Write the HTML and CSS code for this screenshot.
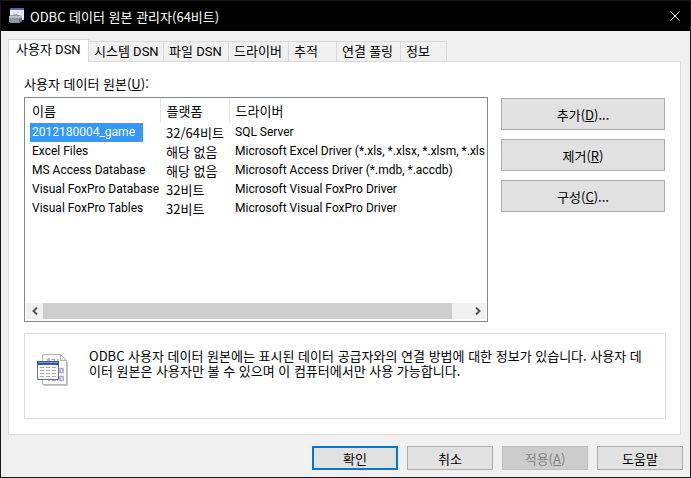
FILE: index.html
```html
<!DOCTYPE html>
<html lang="ko">
<head>
<meta charset="utf-8">
<meta name="viewport" content="width=device-width, initial-scale=1">
<title>ODBC 데이터 원본 관리자(64비트)</title>
<link rel="stylesheet" href="styles.css">
</head>
<body>
<main class="window">
  <header class="titlebar">
    <svg class="app-icon" viewBox="0 0 16 16" aria-hidden="true">
      <path fill="#e6ebf5" d="M1 0h14v12H1z"/>
      <path fill="#4a6fa8" d="M1 0h14v2H1z"/>
      <path fill="#c9d1de" d="M4 4h2v1H4zM8 4h2v1H8zM12 4h2v1h-2zM12 7h2v1h-2z"/>
      <path fill="none" stroke="#a9b3bb" d="M4.500 8V6.500h4V8"/>
      <path fill="#8f9aa4" d="M0 8l2-1h9l2 2v4l-3 2H2l-2-1z"/>
      <path fill="#b9c2c9" d="M0 8h10l3 1v1H0z"/>
      <path fill="#6d7881" d="M10 10h3v3l-3 2zM3 10h1v1H3zM7 10h1v1H7z"/>
    </svg>
    <h1 class="title">ODBC 데이터 원본 관리자(64비트)</h1>
    <button class="close" type="button" aria-label="닫기">
      <svg class="close-icon" viewBox="0 0 10 10" aria-hidden="true"><path d="M.5.5l9 9M9.500.5l-9 9"/></svg>
    </button>
  </header>

  <div class="body">
    <div class="tabs" role="tablist">
      <button class="tab selected" type="button" role="tab" aria-selected="true">사용자 DSN</button>
      <button class="tab" type="button" role="tab">시스템 DSN</button>
      <button class="tab" type="button" role="tab">파일 DSN</button>
      <button class="tab" type="button" role="tab">드라이버</button>
      <button class="tab" type="button" role="tab">추적</button>
      <button class="tab" type="button" role="tab">연결 풀링</button>
      <button class="tab" type="button" role="tab">정보</button>
    </div>

    <section class="panel" role="tabpanel">
      <h2 class="list-label" id="sources-label">사용자 데이터 원본(<u>U</u>):</h2>
      <div class="sources">
        <div class="list">
          <div class="list-view">
            <table class="table" aria-labelledby="sources-label">
              <colgroup><col class="col-name"><col class="col-platform"><col></colgroup>
              <thead>
                <tr><th>이름</th><th>플랫폼</th><th>드라이버</th></tr>
              </thead>
              <tbody>
                <tr><td class="latin"><span class="picked">2012180004_game</span></td><td>32/64비트</td><td class="latin">SQL Server</td></tr>
                <tr><td class="latin">Excel Files</td><td>해당 없음</td><td class="latin">Microsoft Excel Driver (*.xls, *.xlsx, *.xlsm, *.xls</td></tr>
                <tr><td class="latin">MS Access Database</td><td>해당 없음</td><td class="latin">Microsoft Access Driver (*.mdb, *.accdb)</td></tr>
                <tr><td class="latin">Visual FoxPro Database</td><td>32비트</td><td class="latin">Microsoft Visual FoxPro Driver</td></tr>
                <tr><td class="latin">Visual FoxPro Tables</td><td>32비트</td><td class="latin">Microsoft Visual FoxPro Driver</td></tr>
              </tbody>
            </table>
          </div>
          <div class="scrollbar">
            <button class="arrow" type="button" aria-label="왼쪽으로 스크롤"><svg class="arrow-icon" viewBox="0 0 6 8" aria-hidden="true"><path d="M5 .5L1.500 4 5 7.500"/></svg></button>
            <div class="track"><div class="thumb"></div></div>
            <button class="arrow" type="button" aria-label="오른쪽으로 스크롤"><svg class="arrow-icon" viewBox="0 0 6 8" aria-hidden="true"><path d="M1 .5L4.500 4 1 7.500"/></svg></button>
          </div>
        </div>
        <div class="actions">
          <button class="button tall" type="button">추가(<u>D</u>)...</button>
          <button class="button tall" type="button">제거(<u>R</u>)</button>
          <button class="button tall" type="button">구성(<u>C</u>)...</button>
        </div>
      </div>

      <div class="info">
        <svg class="info-icon" viewBox="0 0 32 32" aria-hidden="true">
          <path fill="#c9c9c9" d="M6 1h18l7 7v24H6z"/>
          <path fill="#fcfcfc" stroke="#b5b5b5" d="M5.500.5h18l6 6v24h-24z"/>
          <path fill="#e9e9e9" stroke="#b5b5b5" d="M23.500.5v6h6z"/>
          <g fill="none" stroke="#aaa4c6" stroke-width="1.500">
            <path d="M10 6l2-1v3M14.500 5.500h3v3M21 5v3M23 14.500h3v4h-3zM23 22.500h3v4h-3zM12 24v3M15 26.500h3v-3M20.500 24v3"/>
          </g>
          <path fill="#fafafa" stroke="#64738a" d="M.5 7.500h21v18H.5z"/>
          <path fill="#34589b" d="M0 7h22v4H0z"/>
          <path fill="#6f9cd9" d="M1 8h20v1H1z"/>
          <path fill="none" stroke="#a9b0b0" stroke-dasharray="4 2" d="M3 13.500h16M3 16.500h16M3 19.500h16M3 22.500h16"/>
        </svg>
        <p class="info-text">ODBC 사용자 데이터 원본에는 표시된 데이터 공급자와의 연결 방법에 대한 정보가 있습니다. 사용자 데이터 원본은 사용자만 볼 수 있으며 이 컴퓨터에서만 사용 가능합니다.</p>
      </div>
    </section>
  </div>

  <footer class="footer">
    <button class="button default" type="button">확인</button>
    <button class="button" type="button">취소</button>
    <button class="button" type="button" disabled>적용(<u>A</u>)</button>
    <button class="button" type="button">도움말</button>
  </footer>
</main>
</body>
</html>
```
FILE: styles.css
```css
* { box-sizing: border-box; }

body {
  margin: 0;
  font: 13px/15px "Noto Sans CJK KR", sans-serif;
  color: #000;
}

button {
  margin: 0;
  padding: 0;
  border: 0;
  font: inherit;
  color: inherit;
}

h1, h2, p { margin: 0; font: inherit; }

.window {
  display: flex;
  flex-direction: column;
  min-height: 100vh;
  border: 1px solid #18191a;
  background: #f0f0f0;
}

.titlebar {
  display: flex;
  align-items: center;
  height: 30px;
  padding-left: 8px;
  background: #000;
  color: #fff;
}

.app-icon { width: 16px; height: 16px; }
.title { flex: 1; margin-left: 5px; }
.close { display: grid; place-items: center; width: 30px; height: 30px; background: none; }
.close-icon { width: 10px; height: 10px; fill: none; stroke: #fff; }

.body { flex: 1; display: flex; flex-direction: column; padding: 8px 9px 0 7px; }

.tabs {
  display: grid;
  grid-template-columns: 81px 75px 65px 60px 48px 64px 46px;
  align-items: end;
}

.tab {
  height: 20px;
  padding-left: 5px;
  border: solid #d9d9d9;
  border-width: 1px 1px 0 0;
  background: #f0f0f0;
  font-family: Roboto, "Noto Sans CJK KR", sans-serif;
  text-align: left;
  white-space: nowrap;
}

.tab.selected {
  position: relative;
  height: 23px;
  margin-bottom: -1px;
  padding: 0 0 4px 7px;
  border-left-width: 1px;
  background: #fff;
}

.panel {
  flex: 1;
  display: flex;
  flex-direction: column;
  padding: 14px 14px 15px 15px;
  border: 1px solid #d9d9d9;
  background: #fff;
}

.sources { flex: 1; display: flex; gap: 13px; margin-top: 6px; }

.list {
  flex: 1;
  min-width: 0;
  display: flex;
  flex-direction: column;
  padding: 0 1px 2px;
  border: 1px solid #828790;
}

.list-view { flex: 1; overflow: hidden; }
.table { width: 100%; table-layout: fixed; border-collapse: collapse; white-space: nowrap; }
.col-name { width: 134px; }
.col-platform { width: 69px; }
th, td { height: 19px; padding: 0 0 0 6px; font-weight: 400; text-align: left; }
th { height: 25px; }
th + th { border-left: 1px solid #e5e5e5; }
td:last-child { overflow: hidden; }
.latin { font-family: Roboto, sans-serif; font-size: 12px; }

.picked {
  display: block;
  width: 113px;
  height: 19px;
  margin-left: -2px;
  padding: 2px;
  border: 1px dotted #c87828;
  padding: 1px;
  background: #3399ff;
  color: #fff;
}

.scrollbar { display: flex; height: 16px; background: #f0f0f0; }
.arrow { display: grid; place-items: center; width: 17px; background: none; }
.arrow-icon { width: 6px; height: 8px; fill: none; stroke: #555; stroke-width: 2; }
.track { flex: 1; }
.thumb { width: 96%; height: 100%; background: #cdcdcd; }

.actions { display: flex; flex-direction: column; gap: 9px; width: 164px; padding-top: 1px; margin-right: 1px; }

.button {
  width: 86px;
  height: 24px;
  border: 1px solid #adadad;
  background: #e1e1e1;
}

.button.tall { width: 100%; height: 32px; }
.button.default { border: 2px solid #0078d7; }
.button:disabled { border-color: #bfbfbf; background: #cccccc; color: #838383; }

.info {
  display: flex;
  gap: 20px;
  min-height: 86px;
  margin-top: 11px;
  padding: 14px 16px 8px 12px;
  border: 1px solid #dcdcdc;
}

.info-icon { flex: none; width: 32px; height: 32px; margin-top: 6px; }
.info-text { word-break: break-all; }

.footer {
  display: flex;
  justify-content: flex-end;
  gap: 9px;
  padding: 11px 7px 7px;
}
```
